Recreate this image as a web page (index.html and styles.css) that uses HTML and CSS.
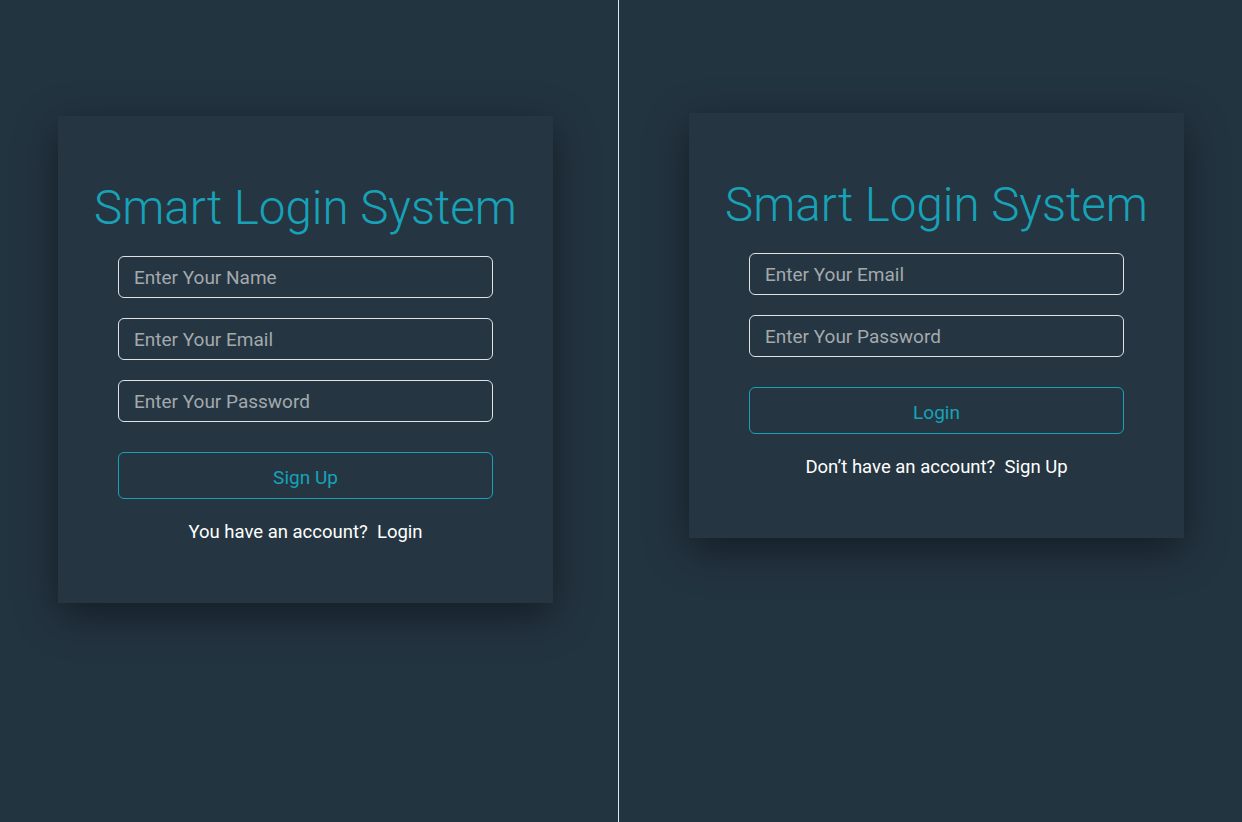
FILE: index.html
```html
<!DOCTYPE html>
<html lang="en">
<head>
<meta charset="utf-8">
<title>Smart Login System</title>
<link rel="stylesheet" href="styles.css">
</head>
<body>
<div class="screen">
  <section class="pane pane-left">
    <div class="card">
      <h1 class="title">Smart Login System</h1>
      <form class="form">
        <input class="field" type="text" placeholder="Enter Your Name">
        <input class="field" type="email" placeholder="Enter Your Email">
        <input class="field" type="password" placeholder="Enter Your Password">
        <button class="btn" type="button">Sign Up</button>
      </form>
      <p class="switch">You have an account?&nbsp; <a href="#">Login</a></p>
    </div>
  </section>
  <div class="divider"></div>
  <section class="pane pane-right">
    <div class="card">
      <h1 class="title">Smart Login System</h1>
      <form class="form">
        <input class="field" type="email" placeholder="Enter Your Email">
        <input class="field" type="password" placeholder="Enter Your Password">
        <button class="btn" type="button">Login</button>
      </form>
      <p class="switch">Don’t have an account?&nbsp; <a href="#">Sign Up</a></p>
    </div>
  </section>
</div>
</body>
</html>
```
FILE: styles.css
```css
* { box-sizing: border-box; }
html, body { margin: 0; padding: 0; }
body {
  background: #233441;
  font-family: Roboto, "Liberation Sans", sans-serif;
  color: #ffffff;
}
.screen {
  display: flex;
  height: 822px;
  overflow: hidden;
}
.pane {
  display: flex;
  align-items: flex-start;
}
.pane-left {
  width: 618px;
  padding: 116px 0 0 58px;
}
.pane-right {
  flex: 1;
  padding: 113px 0 0 70px;
}
.divider {
  width: 1px;
  background: #e4e7ea;
}
.card {
  width: 495px;
  background: #253642;
  box-shadow: 0 12px 40px rgba(0, 0, 0, 0.45);
  padding: 64px 60px 57px;
  display: flex;
  flex-direction: column;
  align-items: center;
}
.title {
  margin: 0 0 19px;
  font-size: 47.5px;
  line-height: 57px;
  font-weight: 300;
  color: #17a2b8;
  white-space: nowrap;
}
.form {
  width: 100%;
  display: flex;
  flex-direction: column;
  gap: 20px;
}
.field {
  height: 42px;
  width: 100%;
  border: 1px solid #dfe3e6;
  border-radius: 6px;
  background: transparent;
  padding: 1px 15px 0;
  font-family: inherit;
  font-size: 19px;
  color: #ffffff;
  outline: none;
}
.field::placeholder {
  color: #a3a9ad;
}
.btn {
  margin-top: 10px;
  height: 47px;
  width: 100%;
  border: 1px solid #17a2b8;
  border-radius: 6px;
  background: transparent;
  color: #17a2b8;
  font-family: inherit;
  font-size: 19px;
  padding: 3px 0 0;
  cursor: pointer;
}
.switch {
  margin: 19px 0 0;
  font-size: 18.5px;
  line-height: 28px;
  color: #ffffff;
}
.switch a {
  color: #ffffff;
  text-decoration: none;
}
```
